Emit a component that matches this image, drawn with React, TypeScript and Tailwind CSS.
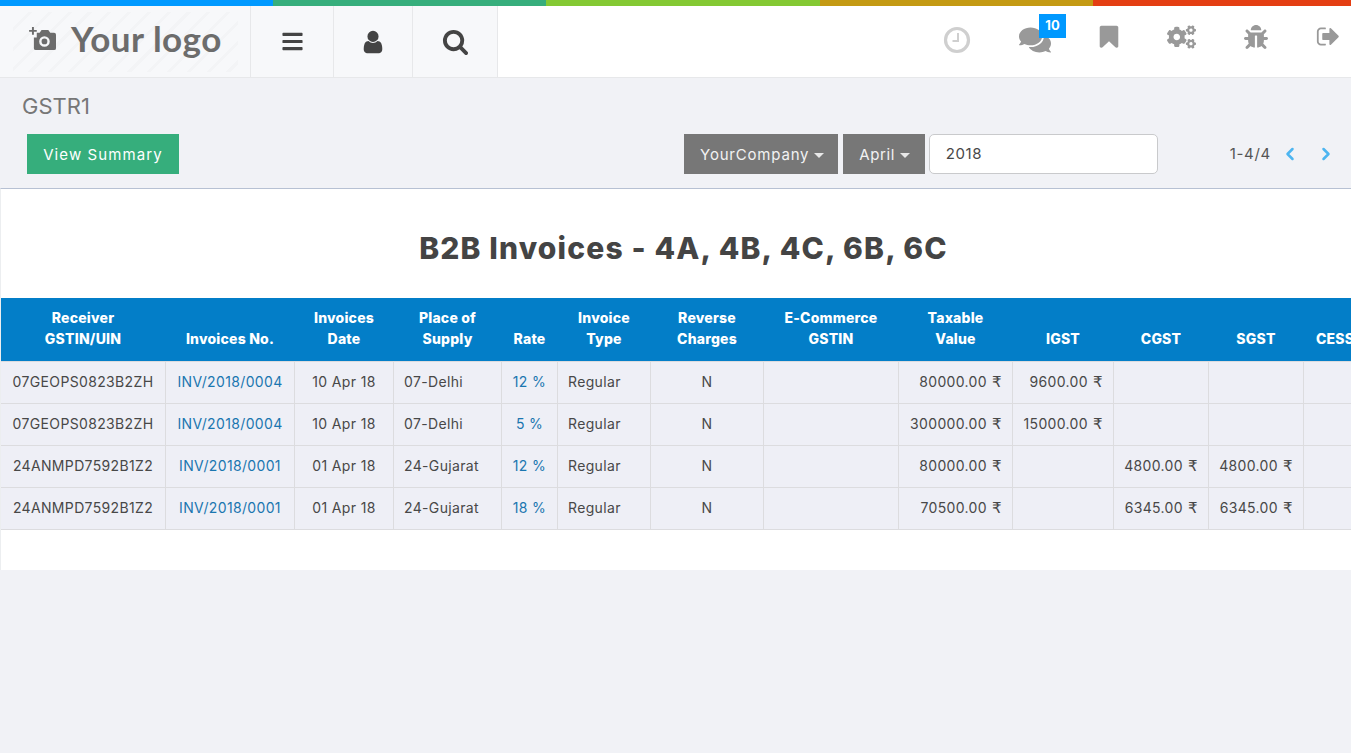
import React from "react";
import { FaBars, FaComments, FaCogs, FaBug } from "react-icons/fa";
import { ChevronLeft, ChevronRight } from "lucide-react";

const Fa4 = ({ d, className }: { d: string; className: string }) => (
  <svg viewBox="0 0 1792 1792" fill="currentColor" className={className}><path d={d} /></svg>
);

const USER = "M1536 1399q0 109-62.5 187t-150.5 78H469q-88 0-150.5-78T256 1399q0-85 8.5-160.5t31.5-152 58.5-131 94-89T583 832q131 128 313 128t313-128q76 0 134.5 34.5t94 89 58.5 131 31.5 152 8.5 160.5zm-256-887q0 159-112.5 271.5T896 896 624.5 783.5 512 512t112.5-271.5T896 128t271.5 112.5T1280 512z";
const SEARCH = "M1216 832q0-185-131.5-316.5T768 384 451.5 515.5 320 832t131.5 316.5T768 1280t316.5-131.5T1216 832zm512 832q0 52-38 90t-90 38q-54 0-90-38l-343-342q-179 124-399 124-143 0-273.5-55.5t-225-150-150-225T64 832t55.5-273.5 150-225 225-150T768 128t273.5 55.5 225 150 150 225T1472 832q0 220-124 399l343 343q37 37 37 90z";
const BOOKMARK = "M1420 128q23 0 44 9 33 13 52.5 41t19.5 62v1289q0 34-19.5 62t-52.5 41q-19 8-44 8-48 0-83-32l-441-424-441 424q-36 33-83 33-23 0-44-9-33-13-52.5-41T256 1529V240q0-34 19.5-62t52.5-41q21-9 44-9h1048z";
const SIGNOUT = "M704 1440q0 4 1 20t.5 26.500-3 23.500-10 19.500-20.500 6.500H352q-119 0-203.500-84.500T64 1248V544q0-119 84.500-203.500T352 256h320q13 0 22.500 9.500T704 288q0 4 1 20t.5 26.500-3 23.500-10 19.500-20.500 6.500H352q-66 0-113 47t-47 113v704q0 66 47 113t113 47h312l11.500 1 11.500 3 8 5.500 7 9 2 13.500zm928-544q0 26-19 45l-544 544q-19 19-45 19t-45-19-19-45v-288H512q-26 0-45-19t-19-45V704q0-26 19-45t45-19h448V352q0-26 19-45t45-19 45 19l544 544q19 19 19 45z";

const Caret = () => (
  <span className="inline-block w-0 h-0 border-x-[5px] border-x-transparent border-t-[5px] border-t-[#e8e8e8] ml-[5px] align-middle" />
);

const rows = [
  ["07GEOPS0823B2ZH", "INV/2018/0004", "10 Apr 18", "07-Delhi", "12 %", "Regular", "N", "", "80000.00", "9600.00", "", "", ""],
  ["07GEOPS0823B2ZH", "INV/2018/0004", "10 Apr 18", "07-Delhi", "5 %", "Regular", "N", "", "300000.00", "15000.00", "", "", ""],
  ["24ANMPD7592B1Z2", "INV/2018/0001", "01 Apr 18", "24-Gujarat", "12 %", "Regular", "N", "", "80000.00", "", "4800.00", "4800.00", ""],
  ["24ANMPD7592B1Z2", "INV/2018/0001", "01 Apr 18", "24-Gujarat", "18 %", "Regular", "N", "", "70500.00", "", "6345.00", "6345.00", ""],
];

const heads: React.ReactNode[] = [
  <>Receiver<br />GSTIN/UIN</>, "Invoices No.", <>Invoices<br />Date</>, <>Place of<br />Supply</>, "Rate",
  <>Invoice<br />Type</>, <>Reverse<br />Charges</>, <>E-Commerce<br />GSTIN</>, <>Taxable<br />Value</>, "IGST", "CGST", "SGST", "CESS",
];

const widths = ["w-[165px]", "w-[129px]", "w-[99px]", "w-[108px]", "w-[56px]", "w-[93px]", "w-[113px]", "w-[135px]", "w-[114px]", "w-[101px]", "w-[95px]", "w-[95px]", "w-[63px]"];

const cellAlign = (c: number) => {
  if (c === 1 || c === 4) return "text-center text-[#1a76b0]";
  if (c === 3 || c === 5) return "text-left pl-[10px]";
  if (c >= 8) return "text-right pr-[10px]";
  return "text-center";
};

const Divider = () => <div className="w-px self-stretch bg-[#e7e8ea]" />;

export default function App() {
  return (
    <div className="min-h-[753px] bg-[#f1f2f6] overflow-hidden font-['Inter','Liberation_Sans',sans-serif] text-[#484848]">
      <div className="flex h-[6px] w-[1366px]">
        <div className="flex-1 bg-[#0099ff]" />
        <div className="flex-1 bg-[#36ae7c]" />
        <div className="flex-1 bg-[#84c933]" />
        <div className="flex-1 bg-[#c49a14]" />
        <div className="flex-1 bg-[#e43e13]" />
      </div>

      <header className="flex h-[72px] bg-white border-b border-[#e7e8ea]">
        <div className="flex bg-[#f7f8fa]">
          <div className="w-[250px] flex items-center pl-[13px]">
            <div className="flex items-center w-[225px] h-[60px] pl-[16px] gap-[13px] bg-[repeating-linear-gradient(135deg,#f7f8fa_0,#f7f8fa_11px,#f3f4f6_11px,#f3f4f6_14px)]">
              <svg viewBox="0 0 30 26" className="w-[29px] h-[25px] -mt-[5px] text-[#6c6c6c]" fill="currentColor">
                <path d="M3 0h2v3h3v2H5v3H3V5H0V3h3z" />
                <path fillRule="evenodd" d="M8 6h3l2-3h7l2 3h4a2 2 0 0 1 2 2v14a2 2 0 0 1-2 2H7a2 2 0 0 1-2-2V11h3zM16 9.500a5.500 5.500 0 1 0 0 11 5.500 5.500 0 0 0 0-11zM16 12a3 3 0 1 1 0 6 3 3 0 0 1 0-6z" />
              </svg>
              <span className="text-[35px] leading-none font-bold tracking-[0.5px] text-[#6c6c6c] font-['Lato',sans-serif] pb-[7px]">Your logo</span>
            </div>
          </div>
          <Divider />
          <div className="w-[82px] flex items-center justify-center"><FaBars className="w-[23px] h-[23px] text-[#444]" /></div>
          <Divider />
          <div className="w-[78px] flex items-center justify-center"><Fa4 d={USER} className="w-[26px] h-[26px] text-[#444]" /></div>
          <Divider />
          <div className="w-[84px] flex items-center justify-center"><Fa4 d={SEARCH} className="w-[27px] h-[27px] text-[#444]" /></div>
          <Divider />
        </div>
        <div className="ml-auto flex items-start pt-[19px] pr-[10px] text-[#999]">
          <svg viewBox="0 0 28 28" className="w-[28px] h-[28px] mt-[1px] mr-[48px] text-[#cfcfcf]" fill="none" stroke="currentColor">
            <circle cx="14" cy="14" r="11.500" strokeWidth="3.200" />
            <path d="M15 7v8H9.500" strokeWidth="2" />
          </svg>
          <div className="relative mr-[45px]">
            <FaComments className="w-[32px] h-[30px]" />
            <span className="absolute -top-[11px] left-[20px] w-[27px] h-[24px] bg-[#0099ff] text-white text-[13px] font-bold flex items-center justify-center">10</span>
          </div>
          <Fa4 d={BOOKMARK} className="w-[26px] h-[26px] -mt-[1px] mr-[45px]" />
          <FaCogs className="w-[29px] h-[26px] -mt-[1px] mr-[48px]" />
          <FaBug className="w-[24px] h-[24px] mr-[48px]" />
          <Fa4 d={SIGNOUT} className="w-[25px] h-[25px] -mt-[1px]" />
        </div>
      </header>

      <div className="pl-[22px] pt-[15px] text-[22px] leading-[26px] text-[#777]">GSTR1</div>

      <div className="flex items-center h-[40px] mt-[15px] pl-[27px] pr-[15px] text-[15px]">
        <button className="w-[152px] h-[40px] pt-[2px] bg-[#36ae7c] text-white tracking-[1.1px]">View Summary</button>
        <button className="w-[154px] h-[40px] pt-[2px] pl-[3px] ml-auto bg-[#777] text-[#f2f2f2] tracking-[0.8px]">YourCompany<Caret /></button>
        <button className="w-[82px] h-[40px] pt-[2px] pl-[2px] ml-[5px] bg-[#777] text-[#f2f2f2] tracking-[0.6px]">April<Caret /></button>
        <div className="w-[229px] h-[40px] pt-[1px] ml-[4px] pl-[16px] flex items-center bg-white border border-[#c9cacc] rounded-[5px] tracking-[0.6px]">2018</div>
        <span className="ml-[72px] pt-[1px] text-[#555] tracking-[0.7px]">1-4/4</span>
        <ChevronLeft className="w-[20px] h-[20px] ml-[9px] text-[#4db5f0]" strokeWidth={3} />
        <ChevronRight className="w-[20px] h-[20px] ml-[16px] text-[#4db5f0]" strokeWidth={3} />
      </div>

      <div className="mt-[14px] h-[382px] bg-white border-t border-[#b7c1d3] border-l border-l-[#eceef0] overflow-hidden">
        <h1 className="w-[1365px] h-[109px] pt-[41px] text-center text-[30px] leading-[36px] font-extrabold tracking-[1.15px] text-[#444]">B2B Invoices - 4A, 4B, 4C, 6B, 6C</h1>
        <table className="table-fixed w-[1366px] -ml-px border-collapse text-[14px] tracking-[0.35px]">
          <thead>
            <tr className="h-[63px] bg-[#037ec8] text-white">
              {heads.map((h, i) => (
                <th key={i} className={`${widths[i]} align-bottom pb-[12px] font-extrabold leading-[21px] tracking-[0.2px] text-center`}>{h}</th>
              ))}
            </tr>
          </thead>
          <tbody>
            {rows.map((r, i) => (
              <tr key={i} className="h-[42px] bg-[#eeeff6]">
                {r.map((c, j) => (
                  <td key={j} className={`border border-[#dcdcdf] whitespace-nowrap overflow-hidden pb-[2px] ${cellAlign(j)}`}>
                    {c}
                    {c && j >= 8 ? <span className="font-['DejaVu_Sans',sans-serif] text-[15px] leading-none"> ₹</span> : null}
                  </td>
                ))}
              </tr>
            ))}
          </tbody>
        </table>
      </div>
    </div>
  );
}
